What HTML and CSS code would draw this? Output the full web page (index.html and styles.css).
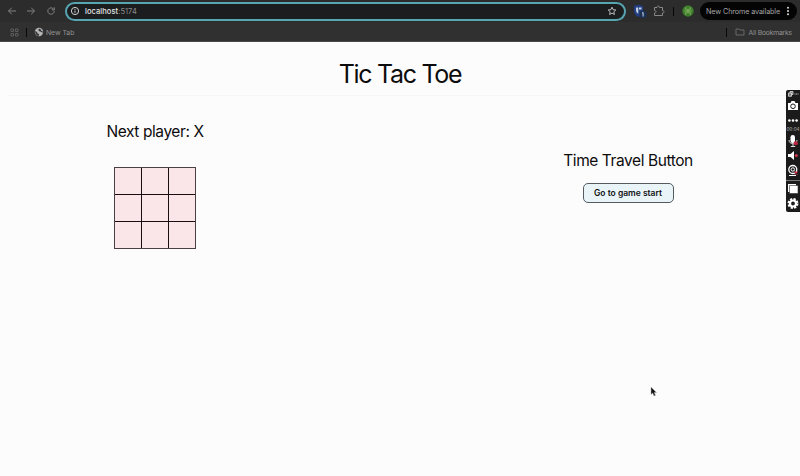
FILE: index.html
```html
<!DOCTYPE html>
<html lang="en">
<head>
<meta charset="utf-8">
<title>Tic Tac Toe</title>
<link rel="stylesheet" href="styles.css">
</head>
<body>
<header class="chrome">
  <div class="toolbar">
    <nav class="nav">
      <svg viewBox="0 0 10 10"><path d="M9 5H1.5M4.8 1.7 1.5 5l3.3 3.3"/></svg>
      <svg viewBox="0 0 10 10"><path d="M1 5h7.5M5.2 1.7 8.500 5 5.200 8.300"/></svg>
      <svg viewBox="0 0 10 10"><path d="M8.200 5a3.200 3.200 0 1 1-1-2.300L8.200 3.800M8.300 1.300v2.600H5.700"/></svg>
    </nav>
    <div class="address">
      <svg class="info" viewBox="0 0 10 10"><circle cx="5" cy="5" r="3.600"/><path d="M5 4.600v2.200M5 2.900v.9"/></svg>
      <span class="url">localhost<span class="port">:5174</span></span>
      <svg class="star" viewBox="0 0 10 10"><path d="m5 1.200 1.100 2.500 2.700.3-2 1.800.6 2.700L5 7.100 2.600 8.500l.6-2.700-2-1.800 2.700-.3z"/></svg>
    </div>
    <svg class="shield" viewBox="0 0 14 14"><path fill="#233f83" d="M1 2 5.500.8 10 2v5c0 3-2 5-4.500 6C3 12 1 10 1 7z"/><path fill="#c3cee3" d="M3 3.500h2.300v6.200C3.700 9 3 7.500 3 6zM6 3.500h2.500v2H6z"/><rect x="6.500" y="7" width="7" height="7" rx="1" fill="#1d3152"/><path d="m9 9.200 1.100-.7v4" fill="none" stroke="#c7d5ea"/></svg>
    <svg class="puzzle" viewBox="0 0 12 12"><path d="M1.500 2.500H4c0-2 2.500-2 2.500 0h3v3c2 0 2 2.500 0 2.500v2.500h-8V8c2 0 2-2.500 0-2.500z"/></svg>
    <i class="sep"></i>
    <svg class="avatar" viewBox="0 0 12 12"><circle cx="6" cy="6" r="5.700" fill="#3d7d2b"/><path d="M3 2.500h1.500V4h3V2.500H9v2H7.500v1H10v1H7.500v1H9v2H7.500V8h-3v1.500H3v-2h1.500v-1H2v-1h2.500v-1H3z" fill="#72a654"/></svg>
    <div class="update">New Chrome available<svg viewBox="0 0 4 10"><circle cx="2" cy="1.700" r="1"/><circle cx="2" cy="5" r="1"/><circle cx="2" cy="8.300" r="1"/></svg></div>
  </div>
  <div class="bookmarks">
    <svg class="apps" viewBox="0 0 9 9"><path d="M1 1h2.500v2.500H1zM5.500 1H8v2.500H5.500zM1 5.500h2.500V8H1zM5.500 5.500H8V8H5.500z"/></svg>
    <i class="sep"></i>
    <svg class="globe" viewBox="0 0 10 10"><circle cx="5" cy="5" r="4.200" fill="#b4b4b4"/><path d="M1 4l2 1 .5 1.500L5 7v1.700H3.500L1.700 7zM5 1.800 4.200 3l1.500 1.500 1.500.3L8.700 6V4.200L7 3.500 6.500 2z" fill="#353535"/></svg>
    <span>New Tab</span>
    <i class="sep right"></i>
    <svg class="folder" viewBox="0 0 10 8"><path d="M1 1h3l1 1h4v5H1z"/></svg>
    <span class="all">All Bookmarks</span>
  </div>
</header>
<main>
  <h1>Tic Tac Toe</h1>
  <div class="game">
    <section class="play">
      <h2>Next player: X</h2>
      <div class="board">
        <i></i><i></i><i></i><i></i><i></i><i></i><i></i><i></i><i></i>
      </div>
    </section>
    <section class="history">
      <h2>Time Travel Button</h2>
      <button>Go to game start</button>
    </section>
  </div>
</main>
<aside class="recorder">
  <svg viewBox="0 0 14 8"><path d="M2.500 3h3v3.300h-3zM4 3V1.500h3v3H5.500" fill="#777" stroke="#ddd" stroke-width=".8"/><path d="M8.500 4h4" stroke="#bbb" stroke-dasharray="1 .5"/></svg>
  <svg viewBox="0 0 14 15"><path d="M2 5h2.500L5.500 3h3l1 2H12v7H2z" fill="#fff"/><circle cx="7" cy="8.300" r="2.300" fill="#fff" stroke="#222"/></svg>
  <svg viewBox="0 0 14 13"><g fill="#fff"><circle cx="3.400" cy="7.500" r="1.300"/><circle cx="7" cy="7.500" r="1.300"/><circle cx="10.600" cy="7.500" r="1.300"/></g></svg>
  <span class="time">00:04</span>
  <svg viewBox="0 0 14 16"><rect x="4.500" y="2" width="4.500" height="8" rx="2.200" fill="#fff"/><path d="M3 7c0 5 8 5 8 0M7 11v2.500M4.800 13.500h4.400" fill="none" stroke="#ddd"/><circle cx="9.800" cy="10.300" r="2" fill="#c32645"/></svg>
  <svg viewBox="0 0 14 14"><path d="M2 5h2.500L8 2v9L4.500 8H2z" fill="#fff"/><circle cx="10.300" cy="6.500" r="1.500" fill="#d33551"/></svg>
  <svg viewBox="0 0 14 17"><circle cx="6.800" cy="6.500" r="4" fill="#222" stroke="#fff" stroke-width="1.300"/><circle cx="6.800" cy="6.500" r="1.700" fill="none" stroke="#fff"/><path d="M3 12.500h7" stroke="#fff"/><path d="m8.500 8.500 3 3m0-3-3 3" stroke="#d33551" stroke-width="1.200"/></svg>
  <i class="rule"></i>
  <svg viewBox="0 0 14 15"><path d="M2 3h8v8H2z" fill="#fff"/><path d="M3.500 4.500H12v8H3.500z" fill="#fff" stroke="#333" stroke-width=".6"/></svg>
  <svg viewBox="0 0 14 15"><circle cx="7" cy="7.500" r="4.500" fill="none" stroke="#fff" stroke-width="2" stroke-dasharray="2.200 1.334"/><circle cx="7" cy="7.500" r="3" fill="none" stroke="#fff" stroke-width="2.200"/></svg>
</aside>
<svg class="cursor" viewBox="0 0 8 12"><path d="M1 1v7.500l1.700-1.400L4 10l1.500-.7-1.300-2.700h2.300z" fill="#111" stroke="#bbb" stroke-width=".5"/></svg>
</body>
</html>
```
FILE: styles.css
```css
* { box-sizing: border-box; }
html, body { height: 100%; }
body {
  margin: 0;
  overflow: hidden;
  background: #fdfcfd;
  color: #0c0c0c;
  font-family: Inter, "Liberation Sans", sans-serif;
}
svg { display: block; flex: none; }
h1, h2 { margin: 0; font-weight: 400; white-space: nowrap; }

.chrome {
  height: 42px;
  background: #303030;
  border-bottom: 1px solid #4a4a4a;
  color: #929292;
  font-size: 7px;
  white-space: nowrap;
}
.toolbar { display: flex; align-items: center; height: 22px; background: #2c2c2c; }
.nav { display: flex; gap: 10px; width: 65px; padding-left: 7px; }
.nav svg { width: 10px; height: 10px; margin-left: -.5px; fill: none; stroke: #828282; stroke-width: 1; }
.address {
  display: flex;
  align-items: center;
  width: 561px;
  height: 19px;
  padding: 0 7px 0 3px;
  border: 2px solid #56a5b0;
  border-radius: 10px;
  background: #1c1d1f;
}
.info { width: 10px; height: 10px; fill: none; stroke: #d0d0d0; }
.url { flex: 1; margin-left: 5px; color: #e5e5e5; font-size: 7.500px; font-weight: 500; letter-spacing: .06px; }
.port { color: #8b8b8b; font-weight: 400; }
.star { width: 10px; height: 10px; fill: none; stroke: #ccc; stroke-width: .9; }
.shield { width: 14px; height: 14px; margin-left: 7px; }
.puzzle { width: 12px; height: 12px; margin-left: 6px; fill: none; stroke: #888; }
.sep { width: 1px; height: 9px; background: #080808; }
.toolbar .sep { margin-left: 8px; }
.avatar { width: 12px; height: 12px; margin-left: 8px; }
.update {
  display: flex;
  align-items: center;
  justify-content: space-between;
  width: 97px;
  height: 18px;
  margin-left: 6px;
  padding: 0 7px 0 6px;
  border-radius: 9px;
  background: #040404;
  color: #a4a4a4;
  font-size: 7.200px;
  letter-spacing: -.1px;
}
.update svg { width: 4px; height: 10px; fill: #ddd; }
.bookmarks { display: flex; align-items: center; height: 20px; padding: 0 8px 0 10px; font-size: 6.800px; }
.apps { width: 9px; height: 9px; margin-right: 7px; fill: none; stroke: #686868; stroke-width: .8; }
.globe { width: 10px; height: 10px; margin: 0 2px 0 7px; }
.bookmarks .right { margin-left: auto; }
.folder { width: 10px; height: 8px; margin: 0 4px 0 8px; fill: none; stroke: #777; stroke-width: .8; }
.all { letter-spacing: -.2px; }

h1 {
  height: 54px;
  margin: 0 8px;
  padding-top: 15px;
  border-bottom: 1px solid #f8f5f7;
  font-size: 25px;
  line-height: 34px;
  letter-spacing: -1.300px;
  text-align: center;
}
.game { display: flex; justify-content: space-between; }
h2 { font-size: 15.500px; line-height: 20px; letter-spacing: -.420px; }
.play { display: flex; flex-direction: column; align-items: center; width: 310px; padding-top: 26px; }
.board {
  display: grid;
  grid-template-columns: repeat(3, 26px);
  grid-auto-rows: 26px;
  gap: 1px;
  margin-top: 25px;
  border: 1px solid #4a3f43;
  background: #180d10;
}
.board i { background: #fae6e8; }
.history { display: flex; flex-direction: column; align-items: center; width: 344px; padding-top: 55px; }
button {
  width: 91px;
  height: 20px;
  margin-top: 12px;
  padding: 0;
  border: 1px solid #555a5f;
  border-radius: 5px;
  background: #e9f4f9;
  color: #111;
  font: 600 8.500px Inter, sans-serif;
  white-space: nowrap;
}

.recorder {
  position: absolute;
  top: 90px;
  right: 0;
  display: flex;
  flex-direction: column;
  width: 14px;
  height: 122px;
  border-radius: 2px 0 0 2px;
  background: #1b1b1b;
}
.recorder svg { width: 14px; }
.time { height: 7px; color: #bbb; font-size: 4.700px; line-height: 7px; text-align: center; }
.rule { height: 1px; background: #777; }
.cursor { position: absolute; left: 650px; top: 386px; width: 8px; height: 12px; }
```
